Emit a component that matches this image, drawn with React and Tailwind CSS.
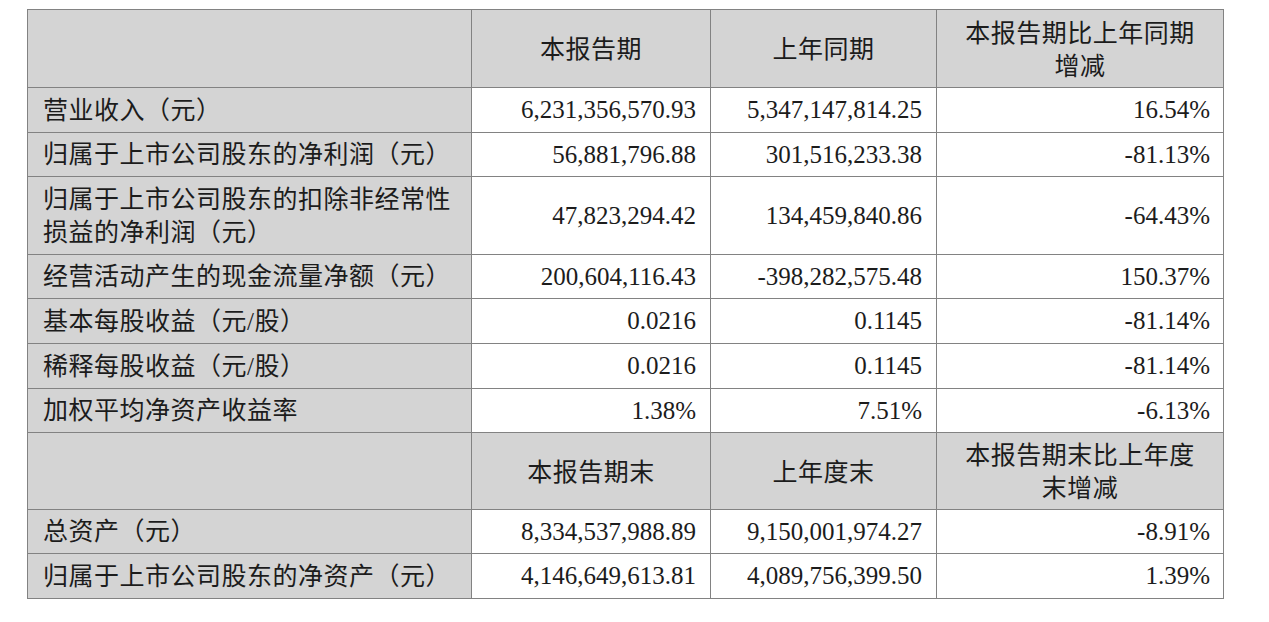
const rows1 = [
  { h: "h-[45px]", label: "营业收入（元）", a: "6,231,356,570.93", b: "5,347,147,814.25", c: "16.54%" },
  { h: "h-[44px]", label: "归属于上市公司股东的净利润（元）", a: "56,881,796.88", b: "301,516,233.38", c: "-81.13%" },
  { h: "h-[78px]", label: ["归属于上市公司股东的扣除非经常性", "损益的净利润（元）"], a: "47,823,294.42", b: "134,459,840.86", c: "-64.43%" },
  { h: "h-[44px]", label: "经营活动产生的现金流量净额（元）", a: "200,604,116.43", b: "-398,282,575.48", c: "150.37%" },
  { h: "h-[45px]", label: "基本每股收益（元/股）", a: "0.0216", b: "0.1145", c: "-81.14%" },
  { h: "h-[45px]", label: "稀释每股收益（元/股）", a: "0.0216", b: "0.1145", c: "-81.14%" },
  { h: "h-[44px]", label: "加权平均净资产收益率", a: "1.38%", b: "7.51%", c: "-6.13%" },
];

const rows2 = [
  { h: "h-[44px]", label: "总资产（元）", a: "8,334,537,988.89", b: "9,150,001,974.27", c: "-8.91%" },
  { h: "h-[45px]", label: "归属于上市公司股东的净资产（元）", a: "4,146,649,613.81", b: "4,089,756,399.50", c: "1.39%" },
];

function HeaderRow({ cols, h }) {
  return (
    <tr className={`${h} bg-[#d4d4d4]`}>
      <td className="border border-[#828282]"></td>
      {cols.map((c, i) => (
        <td key={i} className="border border-[#828282] text-center leading-[33px] text-[25px] tracking-[0.5px] pt-[2px]">
          {Array.isArray(c) ? c.map((l, j) => <div key={j}>{l}</div>) : c}
        </td>
      ))}
    </tr>
  );
}

function DataRow({ r }) {
  const two = Array.isArray(r.label);
  return (
    <tr className={r.h}>
      <td className="border border-[#828282] bg-[#d4d4d4] pl-[15px] text-[25px] tracking-[0.5px] leading-[33px]">
        {two ? r.label.map((l, j) => <div key={j}>{l}</div>) : r.label}
      </td>
      <td className="border border-[#828282] text-right pr-[14px] text-[25px]">{r.a}</td>
      <td className="border border-[#828282] text-right pr-[14px] text-[25px]">{r.b}</td>
      <td className="border border-[#828282] text-right pr-[13px] text-[25px]">{r.c}</td>
    </tr>
  );
}

export default function App() {
  return (
    <div className="w-[1269px] h-[622px] bg-white pt-[9px] pl-[27px] text-[#1c1c1c] font-['Liberation_Serif','Noto_Sans_CJK_SC',serif]">
      <table className="border-collapse table-fixed w-[1196px]">
        <colgroup>
          <col className="w-[444px]" />
          <col className="w-[239px]" />
          <col className="w-[226px]" />
          <col className="w-[287px]" />
        </colgroup>
        <tbody>
          <HeaderRow h="h-[78px]" cols={["本报告期", "上年同期", ["本报告期比上年同期", "增减"]]} />
          {rows1.map((r, i) => (
            <DataRow key={i} r={r} />
          ))}
          <HeaderRow h="h-[77px]" cols={["本报告期末", "上年度末", ["本报告期末比上年度", "末增减"]]} />
          {rows2.map((r, i) => (
            <DataRow key={i} r={r} />
          ))}
        </tbody>
      </table>
    </div>
  );
}
